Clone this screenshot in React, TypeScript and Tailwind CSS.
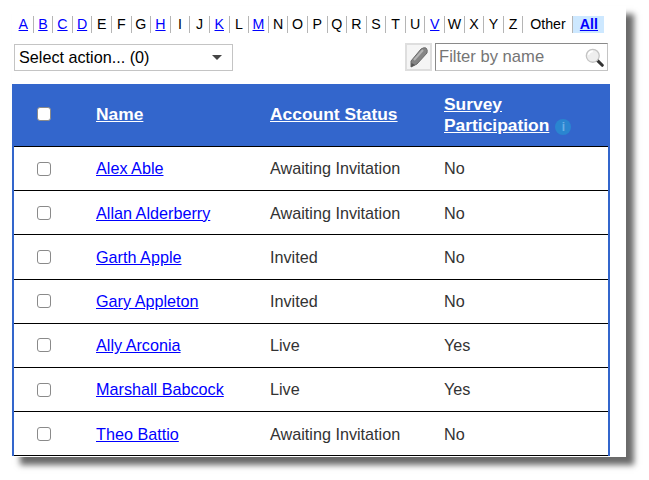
import React from 'react';

const letters = 'ABCDEFGHIJKLMNOPQRSTUVWXYZ'.split('');
const linked = ['A', 'B', 'C', 'D', 'H', 'K', 'M', 'V'];

const rows = [
  { name: 'Alex Able', status: 'Awaiting Invitation', survey: 'No' },
  { name: 'Allan Alderberry', status: 'Awaiting Invitation', survey: 'No' },
  { name: 'Garth Apple', status: 'Invited', survey: 'No' },
  { name: 'Gary Appleton', status: 'Invited', survey: 'No' },
  { name: 'Ally Arconia', status: 'Live', survey: 'Yes' },
  { name: 'Marshall Babcock', status: 'Live', survey: 'Yes' },
  { name: 'Theo Battio', status: 'Awaiting Invitation', survey: 'No' },
];

const Checkbox = () => (
  <input
    type="checkbox"
    className="appearance-none block w-[14px] h-[14px] rounded-[3px] border-[1.5px] border-[#8a8a8a] bg-white"
  />
);

const PencilIcon = () => (
  <svg width="20" height="22" viewBox="0 0 20 22">
    <path d="M2 15 L12 3 Q15 1 17 2 Q19 4 18 7 L8 18 L2 21 Z" fill="#858585" stroke="#6a6a6a" strokeWidth="1" />
    <path d="M5 14 L14 4" stroke="#b4b4b4" strokeWidth="2" />
    <path d="M2 21 L2.5 17 L6 19 Z" fill="#555" />
  </svg>
);

const SearchIcon = () => (
  <svg width="19" height="19" viewBox="0 0 22 22">
    <path d="M14 14 L20 20" stroke="#333" strokeWidth="3.5" strokeLinecap="round" />
    <circle cx="9" cy="9" r="7.5" fill="#eeeeee" stroke="#c4c4c4" strokeWidth="1.5" />
    <path d="M4 8 Q5 4 9 4" stroke="#fff" strokeWidth="2" fill="none" />
  </svg>
);

const App: React.FC = () => {
  return (
    <div className="h-[480px] pt-[6px] pl-3 font-['Liberation_Sans',sans-serif]">
      <div className="w-[614px] h-[451px] pt-[10px] bg-white shadow-[8px_8px_6px_#6a6a6a]">
        {/* Alphabet filter */}
        <div className="flex items-center h-[17px] ml-[2px] text-[14.2px] leading-[17px] text-black">
          {letters.map((l) => (
            <span key={l} className="w-[19.6px] shrink-0 text-center border-r border-[#b5b5b5]">
              {linked.includes(l) ? <a href="#" className="text-[#0000ff] underline">{l}</a> : l}
            </span>
          ))}
          <span className="w-[49px] shrink-0 text-center">Other</span>
          <span className="w-[32px] h-[17px] shrink-0 bg-[#cde8ff] border-l border-[#b5b5b5] text-center font-bold">
            <a href="#" className="text-[#0000ff] underline">All</a>
          </span>
        </div>

        {/* Action row */}
        <div className="flex items-center justify-between mt-[10px] h-[28px] pl-[2px] pr-[18px]">
          <div className="flex items-center justify-between w-[219px] h-[27px] border border-[#c4c4c4] pl-[4px] pr-[10px] text-[16.2px] text-black">
            <span>Select action... (0)</span>
            <span className="w-0 h-0 border-x-[5px] border-x-transparent border-t-[5px] border-t-[#444]" />
          </div>
          <div className="flex items-center gap-[3px]">
            <div className="flex items-center justify-center w-[27px] h-[28px] bg-[#f5f5f5] border-2 border-[#dedede]">
              <PencilIcon />
            </div>
            <div className="flex items-center justify-between w-[173px] h-[28px] border border-[#8a8a8a] border-b-[#c4c4c4] border-r-[#c4c4c4] pl-[3px] pr-[3px] text-[16.6px] text-[#757575]">
              <span>Filter by name</span>
              <SearchIcon />
            </div>
          </div>
        </div>

        {/* Table */}
        <div className="w-[598px] mt-[13px] border-x-2 border-[#3366cc]">
          <div className="flex items-center h-[62px] -mx-[2px] bg-[#3366cc] text-white font-bold text-[17.4px] leading-[21px]">
            <div className="w-[84px] pl-[25px] pb-[2px]"><Checkbox /></div>
            <div className="w-[174px] -mt-[1px]"><a href="#" className="underline">Name</a></div>
            <div className="w-[174px] -mt-[1px]"><a href="#" className="underline">Account Status</a></div>
            <div className="flex-1">
              <a href="#" className="underline">Survey<br />Participation</a>
              <span className="inline-flex items-center justify-center w-[16px] h-[16px] ml-[6px] rounded-full bg-[#2a85d0] text-[#6aaee6] text-[12px] leading-[16px] font-bold align-[0px]">i</span>
            </div>
          </div>
          {rows.map((row) => (
            <div key={row.name} className="flex items-center h-[44.2px] border-t-[1.4px] border-black text-[16.2px] text-[#333333]">
              <div className="w-[82px] pl-[23px]"><Checkbox /></div>
              <div className="w-[174px]"><a href="#" className="text-[#0000ff] underline">{row.name}</a></div>
              <div className="w-[174px]">{row.status}</div>
              <div className="flex-1">{row.survey}</div>
            </div>
          ))}
          <div className="border-t-[1.4px] border-black" />
        </div>
      </div>
    </div>
  );
};

export default App;
